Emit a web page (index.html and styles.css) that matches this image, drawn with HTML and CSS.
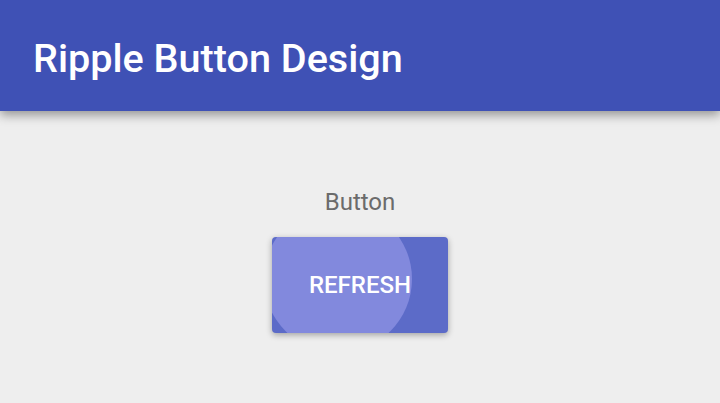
FILE: index.html
```html
<!DOCTYPE html>
<html>
<head>
<meta charset="utf-8">
<link rel="stylesheet" href="styles.css">
</head>
<body>
<header class="appbar"><h1 class="title">Ripple Button Design</h1></header>
<main class="content">
  <div class="label">Button</div>
  <button class="btn"><span class="ripple"></span><span class="btn-text">REFRESH</span></button>
</main>
</body>
</html>
```
FILE: styles.css
```css
html, body { margin: 0; padding: 0; }
body {
  width: 720px; height: 403px; overflow: hidden;
  background: #eeeeee;
  font-family: Roboto, "Noto Sans", sans-serif;
}
.appbar {
  height: 111px;
  background: #3f51b5;
  box-shadow: 0 4px 10px rgba(0,0,0,0.38);
  display: flex; align-items: center;
  padding-left: 33px;
  position: relative; z-index: 1;
}
.title {
  margin: 0; margin-top: 6px;
  color: #ffffff;
  font-size: 39.6px; font-weight: 500;
  line-height: 46px;
}
.content {
  display: flex; flex-direction: column; align-items: center;
  padding-top: 77px;
}
.label {
  color: #6b6b6b; font-size: 24px; line-height: 28px;
}
.btn {
  margin-top: 21px;
  width: 176px; height: 96px;
  border: none; border-radius: 4px;
  background: #5c6bc8;
  box-shadow: 0 2px 6px rgba(0,0,0,0.32);
  position: relative; overflow: hidden;
  padding: 0;
  display: flex; align-items: center; justify-content: center;
}
.ripple {
  position: absolute;
  left: -8px; top: -32px;
  width: 148px; height: 148px;
  border-radius: 50%;
  background: #8289dd;
}
.btn-text {
  position: relative;
  color: #ffffff;
  font-family: Roboto, sans-serif;
  font-size: 24px; font-weight: 500;
  line-height: 28px;
}
```
